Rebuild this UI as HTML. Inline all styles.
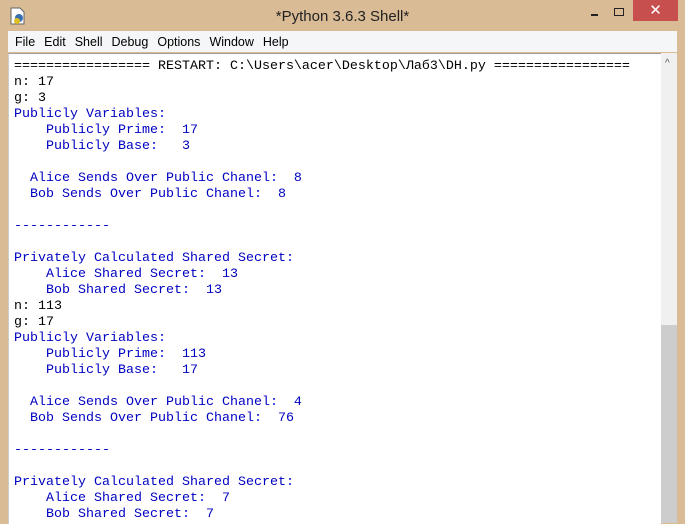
<!DOCTYPE html>
<html><head><meta charset="utf-8"><style>
html,body{margin:0;padding:0;}
body{width:685px;height:523px;background:#d9bb96;position:relative;overflow:hidden;font-family:"Liberation Sans",sans-serif;}
.title{position:absolute;left:0;top:0;width:685px;height:31px;text-align:center;font-size:15px;line-height:33px;color:#222;}
.close{position:absolute;left:633px;top:0;width:45px;height:21px;background:#c7504f;color:#fff;text-align:center;font-size:15px;line-height:21px;}
.menu{position:absolute;left:8px;top:31px;width:669px;height:21px;background:#f5f6f7;font-size:12.5px;line-height:22px;color:#000;}
.menu span{margin-left:7px;margin-right:2px;}
.text{position:absolute;left:8px;top:53px;width:652px;height:470px;background:#fff;border-top:1px solid #a0a0a0;border-left:1px solid #ccc;}
pre{margin:0;position:absolute;left:5px;top:5px;font-family:"Liberation Mono",monospace;font-size:13.33px;line-height:16px;color:#0000c0;}
.k{color:#000;}
.sb{position:absolute;left:661px;top:53px;width:16px;height:470px;background:#f0f0f0;}
.thumb{position:absolute;left:661px;top:325px;width:16px;height:198px;background:#cdcdcd;}
</style></head><body>
<div class="title">*Python 3.6.3 Shell*</div>
<svg style="position:absolute;left:10px;top:7px" width="16" height="18"><path d="M1 1h9l4 4v12H1z" fill="#fff" stroke="#666"/><circle cx="9" cy="11" r="4" fill="#3a6fb0"/><circle cx="7" cy="14" r="3" fill="#e0c020"/></svg>
<div style="position:absolute;left:591px;top:14px;width:7px;height:2px;background:#222"></div>
<div style="position:absolute;left:614px;top:8px;width:8px;height:6px;border:1.5px solid #222"></div>
<div class="close">✕</div>
<div class="menu"><span>File</span><span>Edit</span><span>Shell</span><span>Debug</span><span>Options</span><span>Window</span><span>Help</span></div>
<div class="text"><pre><span class="k">================= RESTART: C:\Users\acer\Desktop\Лаб3\DH.py =================</span>
<span class="k">n: 17</span>
<span class="k">g: 3</span>
Publicly Variables:
    Publicly Prime:  17
    Publicly Base:   3

  Alice Sends Over Public Chanel:  8
  Bob Sends Over Public Chanel:  8

------------

Privately Calculated Shared Secret:
    Alice Shared Secret:  13
    Bob Shared Secret:  13
<span class="k">n: 113</span>
<span class="k">g: 17</span>
Publicly Variables:
    Publicly Prime:  113
    Publicly Base:   17

  Alice Sends Over Public Chanel:  4
  Bob Sends Over Public Chanel:  76

------------

Privately Calculated Shared Secret:
    Alice Shared Secret:  7
    Bob Shared Secret:  7</pre></div>
<div class="sb"></div>
<div style="position:absolute;left:665px;top:58px;font-size:10px;color:#555">^</div>
<div class="thumb"></div>
</body></html>
